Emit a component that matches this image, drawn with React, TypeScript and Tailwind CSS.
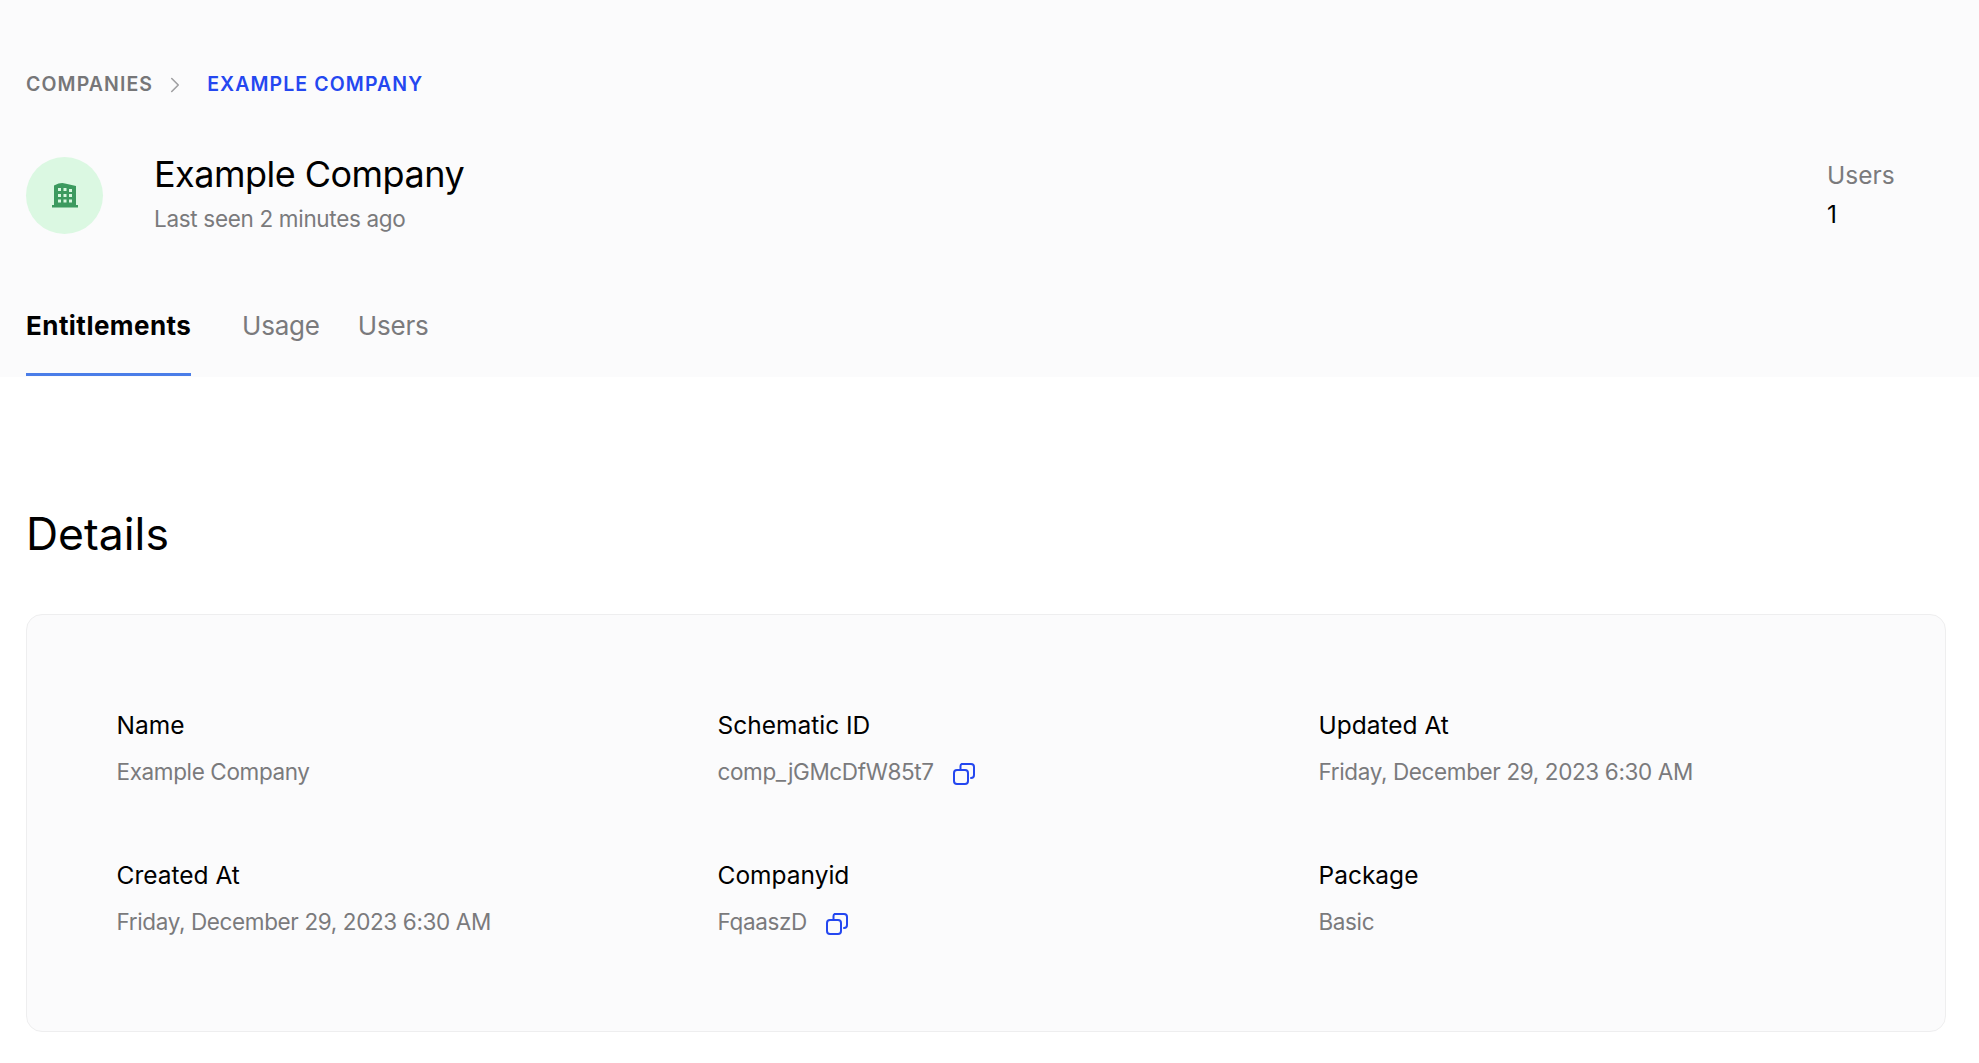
import { ChevronRight } from "lucide-react";

function CopyIcon() {
  return (
    <svg width="24" height="24" viewBox="0 0 24 24" fill="none" stroke="#2447f0" strokeWidth="2" strokeLinecap="round" strokeLinejoin="round" className="ml-[18px] shrink-0 mt-[3px]">
      <rect x="2" y="8" width="14" height="14" rx="3" />
      <path d="M10 2h9a3 3 0 0 1 3 3v8a3 3 0 0 1-3 3" />
      <path d="M8.500 8V4a2 2 0 0 1 1.500-2" />
    </svg>
  );
}

function BuildingIcon() {
  return (
    <svg width="28" height="28" viewBox="0 0 28 28" className="-mt-[2px]">
      <path fill="#3c9a5f" d="M3 4.500 Q10 1 14 2.500L25 5V24h2v2.500H1V24h2z" />
      <g fill="#d9f8e1">
        <rect x="7" y="7" width="3" height="3" />
        <rect x="12.500" y="7" width="3" height="3" />
        <rect x="18" y="8" width="3" height="3" />
        <rect x="7" y="13" width="3" height="3" />
        <rect x="12.500" y="13" width="3" height="3" />
        <rect x="18" y="13" width="3" height="3" />
        <rect x="7" y="18.500" width="3" height="3" />
        <rect x="12.500" y="18.500" width="3" height="3" />
        <rect x="18" y="18.500" width="3" height="3" />
      </g>
    </svg>
  );
}

function Field({ label, value, copy }: { label: string; value: string; copy?: boolean }) {
  return (
    <div>
      <div className="text-[24.500px] leading-[30px] text-black">{label}</div>
      <div className="mt-[17px] flex items-center h-[30px] text-[22.500px] tracking-[-0.370px] text-[#7a7a7c]">
        {value}
        {copy && <CopyIcon />}
      </div>
    </div>
  );
}

export default function App() {
  return (
    <div className="min-h-[1063px] bg-white font-['Inter',sans-serif] overflow-hidden">
      <div className="bg-[#fbfbfc] h-[377px] px-[26px] pt-[72px]">
        <div className="flex items-center h-[26px] text-[19.500px] font-semibold tracking-[1.100px]">
          <span className="text-[#767678]">COMPANIES</span>
          <ChevronRight size={26} strokeWidth={1.500} className="text-[#a0a0a2] ml-[9px] mr-[19px]" />
          <span className="text-[#2447f0]">EXAMPLE COMPANY</span>
        </div>
        <div className="flex mt-[59px] h-[77px]">
          <div className="w-[77px] h-[77px] rounded-full bg-[#dbf8e2] flex items-center justify-center">
            <BuildingIcon />
          </div>
          <div className="ml-[51px] -mt-[5px]">
            <div className="text-[36px] leading-[44px] tracking-[-0.520px] text-black">Example Company</div>
            <div className="text-[22.500px] leading-[30px] mt-[8px] tracking-[-0.320px] text-[#7a7a7c]">Last seen 2 minutes ago</div>
          </div>
          <div className="ml-auto mr-[50px] w-[76px] mt-[3px]">
            <div className="text-[24.500px] leading-[30px] text-[#7a7a7c]">Users</div>
            <div className="text-[24.500px] leading-[30px] mt-[9px] text-black">1</div>
          </div>
        </div>
        <div className="flex mt-[76px] text-[26px] h-[66px]">
          <div className="font-bold text-black h-[66px] w-[165px] border-b-[3px] border-[#4a7de8] leading-[32px] tracking-[0.450px] mr-[51px]">Entitlements</div>
          <div className="text-[#7a7a7c] leading-[32px] tracking-[-0.200px] mr-[38px]">Usage</div>
          <div className="text-[#7a7a7c] leading-[32px] tracking-[-0.200px]">Users</div>
        </div>
      </div>
      <div className="px-[26px]">
        <h1 className="mt-[127px] text-[44.500px] leading-[60px] text-black">Details</h1>
        <div className="mt-[50px] h-[418px] w-[1920px] bg-[#fbfbfc] border border-[#eeeeef] rounded-[16px] pl-[89.500px] pt-[95px]">
          <div className="grid grid-cols-[601px_601px_601px] gap-y-[73px]">
            <Field label="Name" value="Example Company" />
            <Field label="Schematic ID" value="comp_jGMcDfW85t7" copy />
            <Field label="Updated At" value="Friday, December 29, 2023 6:30 AM" />
            <Field label="Created At" value="Friday, December 29, 2023 6:30 AM" />
            <Field label="Companyid" value="FqaaszD" copy />
            <Field label="Package" value="Basic" />
          </div>
        </div>
      </div>
    </div>
  );
}
